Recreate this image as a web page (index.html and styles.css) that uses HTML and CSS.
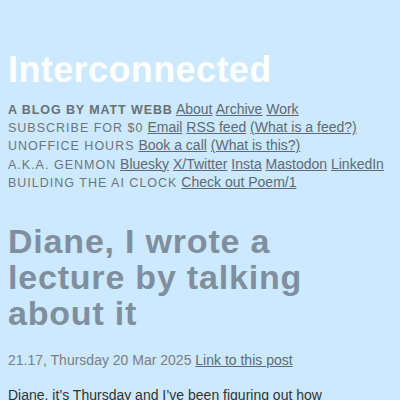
FILE: index.html
```html
<!DOCTYPE html>
<html>
<head>
<meta charset="utf-8">
<link rel="stylesheet" href="styles.css">
</head>
<body>
<header class="masthead">
  <h1 class="site-title">Interconnected</h1>
  <nav class="site-nav">
    <div class="nav-row"><span class="label strong">A blog by Matt Webb</span> <a href="#">About</a> <a href="#">Archive</a> <a href="#">Work</a></div>
    <div class="nav-row"><span class="label">Subscribe for $0</span> <a href="#">Email</a> <a href="#">RSS feed</a> <a href="#">(What is a feed?)</a></div>
    <div class="nav-row"><span class="label">Unoffice hours</span> <a href="#">Book a call</a> <a href="#">(What is this?)</a></div>
    <div class="nav-row"><span class="label">A.k.a. genmon</span> <a href="#">Bluesky</a> <a href="#">X/Twitter</a> <a href="#">Insta</a> <a href="#">Mastodon</a> <a href="#">LinkedIn</a></div>
    <div class="nav-row"><span class="label">Building the AI clock</span> <a href="#">Check out Poem/1</a></div>
  </nav>
</header>
<main class="post">
  <h2 class="post-title">Diane, I wrote a lecture by talking about it</h2>
  <p class="post-meta">21.17, Thursday 20 Mar 2025 <a href="#">Link to this post</a></p>
  <p class="post-body">Diane, it’s Thursday and I’ve been figuring out how</p>
</main>
</body>
</html>
```
FILE: styles.css
```css
html, body {
  margin: 0;
  padding: 0;
  background: #cce9ff;
}
body {
  padding: 0 8px;
  font-family: "Liberation Sans", Arial, sans-serif;
}
.masthead {
  padding-top: 50px;
}
.site-title {
  margin: 0;
  color: #ffffff;
  font-size: 36px;
  line-height: 40px;
  font-weight: bold;
  letter-spacing: 0.4px;
}
.site-nav {
  margin-top: 10px;
  font-size: 14px;
}
.nav-row {
  line-height: 18.2px;
}
.label {
  text-transform: uppercase;
  color: #6c757d;
  font-size: 12.5px;
  line-height: 1;
  letter-spacing: 1px;
}
.label.strong {
  font-weight: bold;
  color: #687078;
  letter-spacing: 0.9px;
}
.site-nav a, .post-meta a {
  color: #5f6a74;
  text-decoration: underline;
}
.post-title {
  margin: 32px 0 0;
  max-width: 340px;
  font-size: 34px;
  line-height: 36px;
  font-weight: bold;
  color: #7f8f9e;
  letter-spacing: 0.8px;
}
.post-meta {
  margin: 20px 0 0;
  font-size: 14px;
  line-height: 18px;
  color: #7a7f85;
}
.post-body {
  margin: 16px 0 0;
  font-size: 14px;
  line-height: 20px;
  color: #333333;
}
```
